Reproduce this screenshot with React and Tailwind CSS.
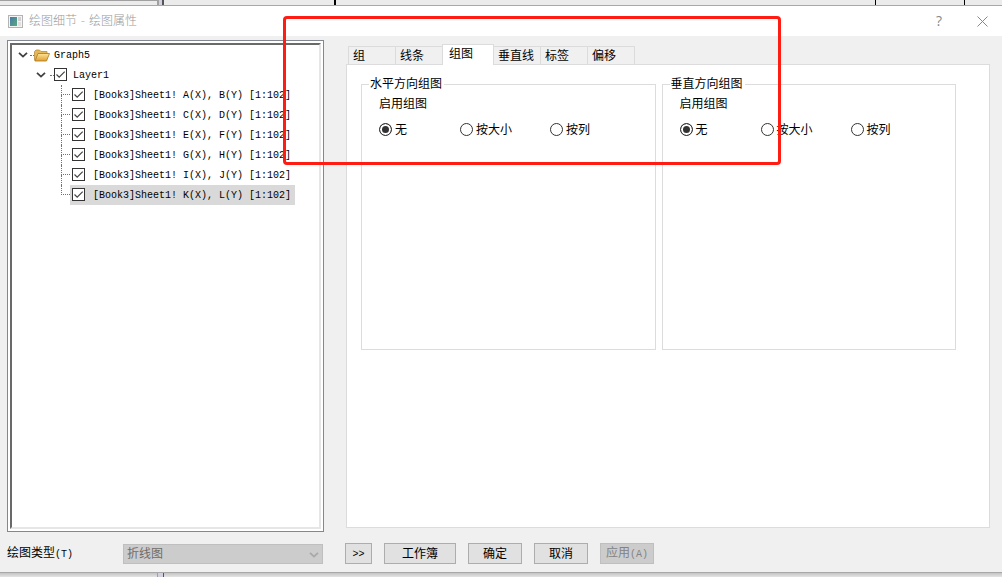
import React, { useState } from "react";

const tabs = [
  { label: "组", width: "w-12" },
  { label: "线条", width: "w-12" },
  { label: "组图", width: "w-13" },
  { label: "垂直线", width: "w-12" },
  { label: "标签", width: "w-12" },
  { label: "偏移", width: "w-12" },
];

const plots = [
  "[Book3]Sheet1! A(X), B(Y) [1:102]",
  "[Book3]Sheet1! C(X), D(Y) [1:102]",
  "[Book3]Sheet1! E(X), F(Y) [1:102]",
  "[Book3]Sheet1! G(X), H(Y) [1:102]",
  "[Book3]Sheet1! I(X), J(Y) [1:102]",
  "[Book3]Sheet1! K(X), L(Y) [1:102]",
];

function WindowIcon() {
  return (
    <svg width="15" height="13" viewBox="0 0 15 13">
      <defs>
        <linearGradient id="screen" x1="0" y1="0" x2="1" y2="1">
          <stop offset="0" stopColor="#4a78a8" />
          <stop offset="1" stopColor="#56ab7c" />
        </linearGradient>
      </defs>
      <rect x="0.5" y="0.5" width="14" height="12" fill="#f4f4f4" stroke="#b4b4b4" />
      <rect x="2" y="2" width="7" height="9" fill="url(#screen)" />
      <rect x="10" y="2" width="3" height="4" fill="#d0d0d0" />
      <rect x="10" y="7" width="3" height="4" fill="#e0e0e0" />
    </svg>
  );
}

function FolderIcon() {
  return (
    <svg width="16" height="13" viewBox="0 0 16 13">
      <defs>
        <linearGradient id="folder" x1="0" y1="0" x2="0" y2="1">
          <stop offset="0" stopColor="#fde49a" />
          <stop offset="1" stopColor="#e0a030" />
        </linearGradient>
      </defs>
      <path
        d="M0.500 11.500V2.500L2 1h3.500L7 2.500h6V5"
        fill="#e6b757"
        stroke="#b98d3c"
        strokeWidth="0.800"
      />
      <path
        d="M1 12 4 4.500h11.500L12.500 12Z"
        fill="url(#folder)"
        stroke="#a87722"
        strokeWidth="0.800"
      />
    </svg>
  );
}

function Chevron({ className }) {
  return (
    <svg width="10" height="6" viewBox="0 0 10 6" fill="none" className={className}>
      <path d="M1 0.800 5 4.600 9 0.800" stroke="currentColor" strokeWidth="1.800" />
    </svg>
  );
}

function CheckBox({ id }) {
  return (
    <span className="relative mb-px block h-[13px] w-[13px] shrink-0">
      <input
        id={id}
        type="checkbox"
        defaultChecked
        className="peer block h-[13px] w-[13px] appearance-none border border-[#333] bg-white"
      />
      <svg
        viewBox="0 0 13 13"
        fill="none"
        className="pointer-events-none absolute inset-0 hidden peer-checked:block"
      >
        <path d="M2.500 6.500 5.200 9.200 10.700 3.700" stroke="#444" strokeWidth="1.200" />
      </svg>
    </span>
  );
}

function PlotTree() {
  return (
    <div className="flex-1 border border-[#828790] bg-white p-0.5">
      <div className="h-full border-t-2 border-r-2 border-b-2 border-l-2 border-t-[#696969] border-r-[#e6e6e6] border-b-[#e6e6e6] border-l-[#696969] font-['Liberation_Mono',monospace] text-[10px] leading-4">
        <div className="flex h-5 items-center pl-1.5">
          <button type="button" aria-label="Graph5" className="w-3">
            <Chevron className="text-[#404040]" />
          </button>
          <span className="w-1 border-t border-dotted border-gray-500" />
          <FolderIcon />
          <span className="pt-0.5 pl-1">Graph5</span>
        </div>
        <div className="flex h-5 items-center pl-6">
          <button type="button" aria-label="Layer1" className="w-3.5">
            <Chevron className="text-[#404040]" />
          </button>
          <span className="w-1 border-t border-dotted border-gray-500" />
          <CheckBox id="layer1" />
          <label htmlFor="layer1" className="pt-0.5 pl-1.5">
            Layer1
          </label>
        </div>
        <ul className="pl-[49px]">
          {plots.map((plot, i) => (
            <li key={plot} className="flex h-5">
              <span className="flex w-[9px] flex-col">
                <span className="h-2.5 border-b border-l border-dotted border-gray-500" />
                {i < plots.length - 1 && (
                  <span className="h-2.5 border-l border-dotted border-gray-500" />
                )}
              </span>
              <span
                className={
                  i === plots.length - 1
                    ? "flex items-center bg-[#d9d9d9] pr-1 pl-0.5"
                    : "flex items-center pr-1 pl-0.5"
                }
              >
                <CheckBox id={`plot${i}`} />
                <label htmlFor={`plot${i}`} className="pt-0.5 pl-2 whitespace-pre">
                  {plot}
                </label>
              </span>
            </li>
          ))}
        </ul>
      </div>
    </div>
  );
}

function RadioOption({ name, label, checked }) {
  return (
    <label className="flex items-center gap-[3px]">
      <input
        type="radio"
        name={name}
        defaultChecked={checked}
        className="h-[13px] w-[13px] appearance-none rounded-full border border-[#333] bg-white checked:bg-[#333] checked:shadow-[inset_0_0_0_2px_white]"
      />
      <span className="pt-1">{label}</span>
    </label>
  );
}

function StackGroup({ name, title }) {
  return (
    <fieldset className="h-[275px] border border-[#dcdcdc] px-[17px]">
      <legend className="-ml-2.5 pt-0.5 pr-0.5 pl-px leading-4">{title}</legend>
      <p className="pt-1 leading-4">启用组图</p>
      <div className="grid grid-cols-[81px_90px_1fr] pt-1.5 leading-4">
        <RadioOption name={name} label="无" checked />
        <RadioOption name={name} label="按大小" />
        <RadioOption name={name} label="按列" />
      </div>
    </fieldset>
  );
}

function DialogButton({ children, className, disabled }) {
  return (
    <button
      type="button"
      disabled={disabled}
      className={`h-[21px] border border-[#adadad] bg-[#e1e1e1] pt-0.5 leading-4 disabled:border-[#bfbfbf] disabled:bg-[#cccccc] disabled:text-[#838383] ${className}`}
    >
      {children}
    </button>
  );
}

function App() {
  const [activeTab, setActiveTab] = useState("组图");

  return (
    <div className="relative flex min-h-screen flex-col bg-[#f0f0f0] font-['Liberation_Mono','Noto_Sans_CJK_SC',monospace] text-xs text-black">
      {/* Edge of the workspace above the dialog */}
      <div className="flex h-1.5 border-b border-[#a8a8a8] bg-[#ebebeb]">
        <div className="w-[158px] border-t border-r border-[#a0a0a0]" />
        <div className="w-1.5 border-r-2 border-l border-r-[#555] border-l-[#a0a0a0] bg-[#d0d0e0]" />
        <div className="w-[172px] border-r-2 border-black" />
        <div className="flex-1" />
        <div className="w-[90px] border-x border-black" />
        <div className="w-[37px]" />
      </div>

      <header className="flex h-[30px] items-center bg-white pr-3.5 pl-2">
        <WindowIcon />
        <h1 className="flex-1 pl-1.5 font-['DejaVu_Sans','Noto_Sans_CJK_SC',sans-serif] text-xs font-light text-[#999]">
          绘图细节 - 绘图属性
        </h1>
        <button
          type="button"
          className="w-3 font-['Open_Sans',sans-serif] text-sm text-[#888]"
        >
          ?
        </button>
        <button type="button" aria-label="关闭" className="ml-8">
          <svg width="11" height="11" viewBox="0 0 11 11" stroke="#888" className="block">
            <path d="M0.500 0.500 10.500 10.500M10.500 0.500 0.500 10.500" />
          </svg>
        </button>
      </header>

      <main className="flex flex-1 gap-[22px] pt-1 pr-3 pl-[7px]">
        <section className="flex w-[317px] flex-col">
          <PlotTree />
        </section>

        <section className="flex flex-1 flex-col pt-1 pb-1">
          <div role="tablist" className="flex h-5 items-end pl-0.5">
            {tabs.map(({ label, width }) => (
              <button
                key={label}
                type="button"
                role="tab"
                aria-selected={label === activeTab}
                onClick={() => setActiveTab(label)}
                className={`${width} ${
                  label === activeTab
                    ? "relative -mr-px -mb-px h-[21px] bg-white pl-1.5"
                    : "-mr-px h-[18px] pt-0.5 pl-1"
                } border border-b-0 border-[#dcdcdc] text-left leading-4 whitespace-nowrap`}
              >
                {label}
              </button>
            ))}
          </div>
          <div
            role="tabpanel"
            className="flex-1 border border-[#dcdcdc] bg-white pt-2.5 pr-[33px] pl-3.5"
          >
            <div className="grid grid-cols-2 gap-1.5">
              <StackGroup name="horizontal" title="水平方向组图" />
              <StackGroup name="vertical" title="垂直方向组图" />
            </div>
          </div>
        </section>
      </main>

      <footer className="flex items-center border-b border-[#a8a8a8] pt-[11px] pb-2 pl-[7px]">
        <label htmlFor="plot-type" className="w-[116px] pt-0.5 leading-4">
          绘图类型<span className="text-[10px]">(T)</span>
        </label>
        <div className="relative mr-[22px] w-[200px]">
          <select
            id="plot-type"
            disabled
            className="block h-5 w-full appearance-none border border-[#bfbfbf] bg-[#cccccc] pt-0.5 pl-[3px] leading-4 text-[#6d6d6d]"
          >
            <option>折线图</option>
          </select>
          <Chevron className="pointer-events-none absolute top-2 right-1 text-[#a8a8a8]" />
        </div>
        <div className="flex gap-3">
          <DialogButton className="w-[27px] text-[10px]">&gt;&gt;</DialogButton>
          <DialogButton className="w-[72px]">工作簿</DialogButton>
          <DialogButton className="w-[54px]">确定</DialogButton>
          <DialogButton className="w-[54px]">取消</DialogButton>
          <DialogButton className="w-[54px]" disabled>
            应用<span className="text-[10px]">(A)</span>
          </DialogButton>
        </div>
      </footer>

      {/* Workspace showing below the dialog */}
      <div className="flex h-1 bg-linear-to-b from-[#c4c4c4] to-[#e4e4e4]">
        <div className="w-[157px]" />
        <div className="w-[7px] border-r border-l border-r-[#555] border-l-[#a0a0a0] bg-[#d0d0e0]" />
      </div>

      {/* Highlight over the stacking options */}
      <div className="pointer-events-none absolute top-4 left-[283px] h-[149px] w-[498px] rounded-sm border-3 border-[#ff1c12]" />
    </div>
  );
}

export default App;
